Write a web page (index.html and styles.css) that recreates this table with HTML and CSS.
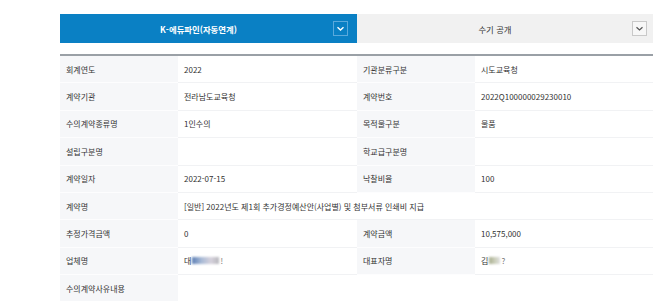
FILE: index.html
```html
<!DOCTYPE html>
<html lang="ko">
<head>
<meta charset="utf-8">
<link rel="stylesheet" href="styles.css">
</head>
<body>
<div class="wrap">
  <div class="tabs">
    <div class="tab tab-on">
      <span class="tab-label">K-에듀파인(자동연계)</span>
      <span class="dd dd-on"><svg viewBox="0 0 15 15" width="15" height="15"><path d="M4.5 6.2 L7.5 9 L10.5 6.2" fill="none" stroke="#fff" stroke-width="1.4"/></svg></span>
    </div>
    <div class="tab tab-off">
      <span class="tab-label">수기 공개</span>
      <span class="dd dd-off"><svg viewBox="0 0 15 15" width="15" height="15"><path d="M4.5 6.2 L7.5 9 L10.5 6.2" fill="none" stroke="#555" stroke-width="1.2"/></svg></span>
    </div>
  </div>
  <div class="grid">
    <div class="th">회계연도</div><div class="td">2022</div><div class="th">기관분류구분</div><div class="td">시도교육청</div>
    <div class="th">계약기관</div><div class="td">전라남도교육청</div><div class="th">계약번호</div><div class="td">2022Q100000029230010</div>
    <div class="th">수의계약종류명</div><div class="td">1인수의</div><div class="th">목적물구분</div><div class="td">물품</div>
    <div class="th">설립구분명</div><div class="td"></div><div class="th">학교급구분명</div><div class="td"></div>
    <div class="th">계약일자</div><div class="td">2022-07-15</div><div class="th">낙찰비율</div><div class="td">100</div>
    <div class="th">계약명</div><div class="td span3">[일반] 2022년도 제1회 추가경정예산안(사업별) 및 첨부서류 인쇄비 지급</div>
    <div class="th">추정가격금액</div><div class="td">0</div><div class="th">계약금액</div><div class="td">10,575,000</div>
    <div class="th">업체명</div><div class="td"><span>대</span><span class="blur blur-a"></span><span class="tail">!</span></div><div class="th">대표자명</div><div class="td"><span>김</span><span class="blur blur-b"></span><span class="tail">?</span></div>
    <div class="th">수의계약사유내용</div><div class="td span3 last"></div>
  </div>
</div>
</body>
</html>
```
FILE: styles.css
```css
html, body {
  margin: 0;
  padding: 0;
  background: #fff;
}
body {
  font-family: "Noto Sans CJK KR", "Noto Sans", sans-serif;
  font-size: 8px;
  color: #333;
  overflow: hidden;
}
.wrap {
  width: 593px;
  margin-left: 60px;
  padding-top: 14px;
}
.tabs {
  display: grid;
  grid-template-columns: 297px 296px;
  height: 29px;
}
.tab {
  position: relative;
  display: flex;
  align-items: center;
  justify-content: center;
  padding-right: 20px;
  box-sizing: border-box;
}
.tab-on {
  background: #0a80c4;
  color: #fff;
  font-weight: 700;
}
.tab-off {
  background: #f1f1f1;
  color: #333;
}
.tab-label {
  font-size: 8.4px;
}
.dd {
  position: absolute;
  top: 7px;
  width: 15px;
  height: 15px;
  box-sizing: border-box;
  display: flex;
}
.dd svg {
  display: block;
  margin: -1px;
}
.dd-on {
  right: 9px;
  border: 1px solid #5aa9dc;
}
.dd-off {
  right: 6px;
  border: 1px solid #c9c9c9;
  background: #f7f7f7;
}
.grid {
  margin-top: 11px;
  border-top: 2px solid #9aa0a6;
  display: grid;
  grid-template-columns: 118px 179px 118px 178px;
  grid-auto-rows: 27.375px;
}
.th, .td {
  display: flex;
  align-items: center;
  box-sizing: border-box;
  border-bottom: 1px solid #f1f2f4;
  white-space: nowrap;
}
.th {
  background: #f6f7f9;
  padding-left: 6px;
  border-bottom-color: #fdfdfe;
}
.td {
  background: #fff;
  padding-left: 6px;
}
.span3 {
  grid-column: span 3;
}
.last {
  border-bottom: none;
}
.blur {
  display: inline-block;
  height: 7px;
  filter: blur(1.2px);
  margin-left: 1px;
}
.blur-a {
  width: 27px;
  background: linear-gradient(90deg, #5d7fb5 0%, #a8bad6 35%, #d7d2dc 70%, #b7b7bd 100%);
}
.blur-b {
  width: 11px;
  background: linear-gradient(90deg, #a8ae8e 0%, #cfd2c0 60%, #e0e0e0 100%);
}
.tail {
  color: #777;
  margin-left: 1px;
}
```
